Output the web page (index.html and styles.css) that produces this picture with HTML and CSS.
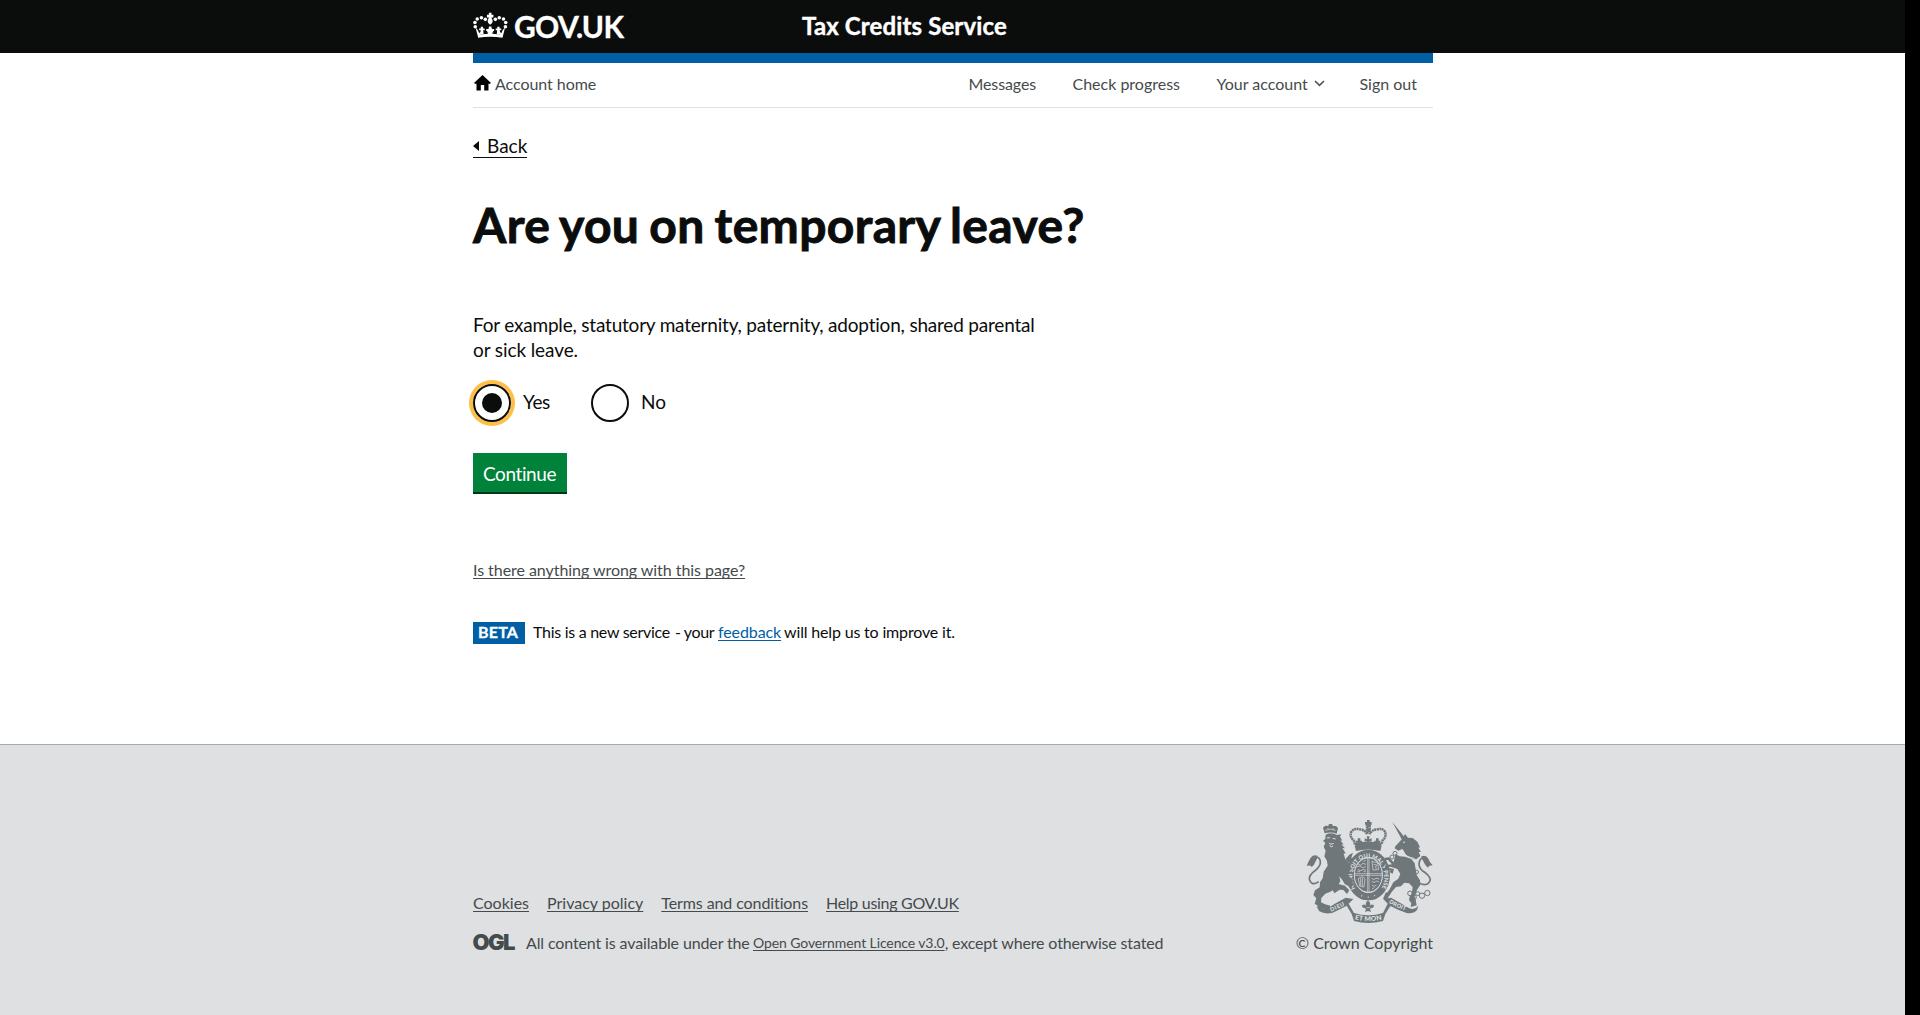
FILE: index.html
```html
<!DOCTYPE html>
<html lang="en">
<head>
<meta charset="utf-8">
<title>Are you on temporary leave?</title>
<link rel="stylesheet" href="styles.css">
</head>
<body>
<div class="page">
  <header class="header">
    <div class="container header-inner">
      <a class="logo">
        <svg class="crown" viewBox="9 22 108 80" fill="#fff">
          <path d="M17 68 L25 100 Q62 93 100 100 L108 68 Q98 76 97 85 Q90 83 88 71 Q82 74 84 85 Q75 88 70 82 L74 76 L65 78 L67 69 H57 L59 78 L50 76 L54 82 Q49 88 40 85 Q42 74 36 71 Q35 83 28 85 Q26 76 17 68Z"/>
          <path d="M32 86 Q62 80 93 86 L92 90 Q62 85 33 90Z" fill="#0b0c0c"/>
          <path d="M58 23h8v6h6v8h-6l4 11q0 7-8 12q-8-5-8-12l4-11h-6v-8h6zM33 66h7v5h5v6h-5l2 13h-11l2-13h-5v-6h5zM84 66h7v5h5v6h-5l2 13h-11l2-13h-5v-6h5zM58 65h8v8h8v6h-7l3 10h-16l3-10h-7v-6h8z"/>
          <circle cx="16" cy="66" r="5.5"/><circle cx="15" cy="53" r="5.5"/><circle cx="22" cy="42" r="5.5"/><circle cx="35" cy="38" r="5.5"/><circle cx="47" cy="43" r="5.5"/>
          <circle cx="109" cy="66" r="5.5"/><circle cx="110" cy="53" r="5.5"/><circle cx="103" cy="42" r="5.5"/><circle cx="90" cy="38" r="5.5"/><circle cx="78" cy="43" r="5.5"/>
        </svg>
        <span class="logo-text">GOV.UK</span>
      </a>
      <span class="service">Tax Credits Service</span>
    </div>
  </header>

  <div class="container">
    <nav class="account-nav">
      <a class="home">
        <svg class="home-icon" viewBox="0 0 17 16"><path d="M8.5 0 L17 8 L15.5 9 L14.5 8.6 V15.5 H10.2 V10 H6.8 V15.5 H2.5 V8.6 L1.5 9 L0 8 Z"/></svg>
        <span class="home-text">Account home</span>
      </a>
      <div class="links">
        <a class="l-messages">Messages</a>
        <a class="l-progress">Check progress</a>
        <a class="l-account">Your account<svg class="chevron" viewBox="0 0 11 7"><path d="M1 1 L5.5 5.3 L10 1" fill="none" stroke="#505558" stroke-width="1.7"/></svg></a>
        <a class="l-signout">Sign out</a>
      </div>
    </nav>

    <main class="content">
      <a class="back"><svg class="back-icon" viewBox="0 0 6 10"><path d="M6 0v10L0 5z" fill="#0b0c0c"/></svg><span>Back</span></a>
      <h1 class="title">Are you on temporary leave?</h1>
      <p class="hint">For example, statutory maternity, paternity, adoption, shared parental<br><span class="hint-end">or sick leave.</span></p>
      <div class="radios">
        <label class="radio radio-yes"><span class="ring ring-focus"><span class="dot"></span></span><span class="yes">Yes</span></label>
        <label class="radio"><span class="ring"></span><span>No</span></label>
      </div>
      <button class="button">Continue</button>
      <a class="report">Is there anything wrong with this page?</a>
      <div class="phase">
        <strong class="tag">BETA</strong>
        <span class="p-one">This is a new service</span>
        <span class="p-two">- your</span>
        <a class="p-link">feedback</a>
        <span class="p-three">will help us to improve it.</span>
      </div>
    </main>
  </div>

  <footer class="footer">
    <div class="container footer-inner">
      <div class="meta">
        <div class="footer-links">
          <a class="f-cookies">Cookies</a>
          <a class="f-privacy">Privacy policy</a>
          <a class="f-terms">Terms and conditions</a>
          <a class="f-help">Help using GOV.UK</a>
        </div>
        <div class="licence">
          <svg class="ogl" viewBox="0 0 42 20"><text x="-0.6" y="16.5" textLength="43" lengthAdjust="spacing">OGL</text></svg>
          <span class="c-one">All content is available under the</span>
          <a class="c-link">Open Government Licence v3.0</a><span class="c-two">, except where otherwise stated</span>
        </div>
      </div>
      <div class="copyright">
        <svg class="crest" viewBox="9 12 381 312" fill="#6f777b">
          <!-- crown -->
          <g>
            <path d="M155 92 Q195 82 236 92 L232 108 Q195 99 159 108Z"/>
            <path d="M156 88 L152 76 Q140 66 144 52 Q152 38 170 43 Q186 45 192 57 V32 H200 V57 Q206 45 222 43 Q240 38 247 52 Q250 66 239 76 L235 88" fill="none" stroke="#6f777b" stroke-width="7.5" stroke-dasharray="6 1.5"/>
            <path d="M192 15h8v6h6v8h-6v8h-8v-8h-6v-8h6zM191 64h9l-2 9 8-3v10l-7-2 4 9h-15l4-9-7 2v-10l8 3zM164 70h8v7h5v6h-5l2 7-11 1 1-8h-6v-6h6zM219 70h8v7h5v6h-5l2 8-12-1 2-7h-5v-6h5z"/>
            <path d="M156 84 Q196 76 235 84 V92 H156Z"/>
            <circle cx="196" cy="45" r="6"/>
          </g>
          <!-- garter and shield -->
          <ellipse cx="196" cy="180" rx="54" ry="65" fill="none" stroke="#6f777b" stroke-width="22"/>
          <ellipse cx="196" cy="180" rx="42" ry="52"/>
          <ellipse cx="196" cy="180" rx="42" ry="52" fill="none" stroke="#dee0e2" stroke-width="2.5"/>
          <path d="M194 129v104M198 129v104M155 176h82M155 181h82" stroke="#dee0e2" stroke-width="1.8"/>
          <path d="M164 146l9 5 6-6 10 3M161 155l10-2 8 5 9-3M164 164l10 3 6-4 9 3M163 170h8M182 170h6M181 139l7-3M207 139l3 26 17-1-3-20zM212 148l9 2-4 8 5 3M166 190l14-5 6 7-3 24-13-3zM173 190v22M178 189v25M206 190l8 4 5-5 10 3M206 200l9 2 6-4 7 3M207 211l7 3 6-4M207 222l7-4" fill="none" stroke="#dee0e2" stroke-width="2"/>
          <path id="garter" d="M157 221 A48 59 0 1 1 235 221" fill="none"/>
          <text class="motto"><textPath href="#garter" textLength="238">HONI SOIT QUI MAL Y PENSE</textPath></text>
          <path d="M175 239l4 3-3 4zM195 243l3 4-4 2zM214 239l3 4-5 1z" fill="#dee0e2"/>
          <!-- lion -->
          <path d="M65 55 L60 38 L66 32 L76 33 L78 27 L87 27 L90 33 L99 33 L105 39 L101 56 Q83 49 65 55Z"/>
          <path d="M67 46q15-7 31 0M74 39l2 4M90 39l1 4" fill="none" stroke="#dee0e2" stroke-width="2"/>
          <path d="M68 59 Q84 50 102 60 L115 58 L111 65 L118 77 L112 76 L122 89 L115 88 L126 100 L118 99 L128 115 L122 116 L127 133 L140 145 L143 165 L134 172 L138 184 L148 195 L150 210 L143 222 L136 213 L125 207 L118 195 L109 184 L112 199 L101 218 L82 230 L67 236 L55 249 L54 262 L66 268 L82 272 L78 285 L62 281 L48 284 L42 270 L35 267 L40 250 L31 240 L36 226 L50 217 L51 202 L59 190 L62 170 L74 152 L72 138 L64 124 L68 108 L62 95 L67 84 L60 77 L67 72Z"/>
          <path d="M72 69l9-1M89 70l9 2M78 84l6 4 8-3M80 91q4 9 10 2" fill="none" stroke="#dee0e2" stroke-width="3"/>
          <path d="M127 133 L139 119 L150 113 L145 128 L151 136 L138 143Z"/>
          <path d="M47 200 Q26 215 19 193 Q18 180 35 168 Q54 153 52 139 Q50 126 38 126" fill="none" stroke="#6f777b" stroke-width="5"/>
          <path d="M43 122 Q31 118 23 128 Q16 139 11 153 Q22 149 26 156 Q34 151 38 139 Q43 133 43 122Z"/>
          <path d="M86 219 L107 207 L126 212 L139 226 L132 237 L121 225 L110 224 L94 235Z"/>
          <!-- unicorn -->
          <path d="M268 21 L306 68 L296 73Z"/>
          <path d="M306 57 L315 68 L329 69 L343 80 L351 97 L346 98 L354 111 L347 111 L352 123 L338 134 L324 129 L309 121 L303 109 L298 102 L286 107 L275 100 L277 94 L291 79 L300 68Z"/>
          <circle cx="303" cy="82" r="2.5" fill="#dee0e2"/>
          <path d="M278 117 L290 124 L306 125 L325 132 L335 145 L338 162 L341 180 L351 196 L352 209 L342 225 L336 241 L329 252 L321 249 L327 231 L329 216 L318 205 L304 203 L294 214 L279 216 L266 231 L258 244 L249 238 L260 223 L271 202 L286 191 L292 177 L283 162 L263 155 L250 158 L249 150 L267 148 L255 135 L246 136 L245 128 L258 127 L272 142 L274 132Z"/>
          <path d="M284 119l14-8 17 14 17 5 9 6" fill="none" stroke="#dee0e2" stroke-width="3"/>
          <path d="M246 151l12 8 15 3-4 14-9-4 2-6-16-6zM321 240l15 5 5 26-18 5 2-11-7-10zM249 231l10 10-7 13-12-3z"/>
          <path d="M349 205 Q377 216 382 194 Q379 179 358 167 Q345 155 349 140 Q352 128 365 127" fill="none" stroke="#6f777b" stroke-width="5"/>
          <path d="M355 124 Q370 119 376 131 Q380 142 389 151 Q378 151 375 158 Q365 150 361 139 Q357 134 355 124Z"/>
          <g fill="none" stroke="#6f777b" stroke-width="3"><circle cx="267" cy="126" r="6"/><circle cx="276" cy="115" r="6"/><circle cx="341" cy="171" r="5.5"/><circle cx="321" cy="235" r="7"/><circle cx="333" cy="247" r="7"/><circle cx="344" cy="236" r="6"/><circle cx="357" cy="242" r="8"/><circle cx="373" cy="234" r="8"/></g>
          <!-- scroll -->
          <path d="M40 274 Q58 289 79 277 Q101 262 128 248 L151 252 L137 266 L153 294 Q196 308 240 294 L254 266 L241 252 L264 248 Q293 264 316 278 Q334 288 346 272 L342 285 Q331 297 311 294 Q287 286 262 273 L247 297 L240 318 Q196 330 153 318 L146 297 L131 272 Q107 285 87 294 Q64 298 49 289Z"/>
          <path d="M195 256q10 8 5 18 4-9 12-4 3 8-7 9l-4 3 3 9-9-3-9 3 3-9-4-3q-10-1-7-9 8-5 12 4-5-10 5-18z"/>
          <path d="M190 278h11" stroke="#dee0e2" stroke-width="2"/>
          <path id="dieu" d="M84 290 Q108 281 135 265" fill="none"/><path id="mon" d="M155 313 Q196 323 240 313" fill="none"/><path id="droit" d="M257 263 Q285 280 316 290" fill="none"/>
          <text class="scroll"><textPath href="#dieu" textLength="46">DIEU</textPath></text>
          <text class="scroll scroll-big"><textPath href="#mon" textLength="82">ET MON</textPath></text>
          <text class="scroll"><textPath href="#droit" textLength="55">DROIT</textPath></text>
        </svg>
        <a class="crown-text">© Crown Copyright</a>
      </div>
    </div>
  </footer>
</div>
</body>
</html>
```
FILE: styles.css
```css
* { box-sizing: border-box; }

html { background: #000; }

body {
  margin: 0;
  font-family: Lato, "Liberation Sans", sans-serif;
  font-size: 16px;
  line-height: 20px;
  color: #0b0c0c;
}

svg { display: block; flex: none; }

.page {
  width: 1905px;
  height: 1015px;
  display: flex;
  flex-direction: column;
  background: #fff;
  overflow: hidden;
  white-space: nowrap;
}

.container { width: 960px; margin: 0 0 0 473px; }

/* Header */
.header { height: 53px; background: #0b0c0c; color: #fff; flex: none; }
.header-inner { display: flex; align-items: flex-start; }
.logo { display: flex; width: 329px; }
.crown { width: 35px; height: 27px; margin: 12px 6px 0 0; }
.logo-text { margin-top: 11px; font-size: 30px; line-height: 30px; font-weight: 700; letter-spacing: -0.7px; -webkit-text-stroke: 0.3px #fff; }
.service { margin-top: 11px; font-size: 24px; line-height: 30px; font-weight: 700; letter-spacing: 0.13px; -webkit-text-stroke: 0.4px #fff; }

/* Account navigation */
.account-nav {
  height: 55px;
  border-top: 10px solid #005ea5;
  border-bottom: 1px solid #dee0e2;
  display: flex;
  justify-content: space-between;
  padding-top: 11px;
  color: #454a4c;
}
.home { display: flex; }
.home-icon { width: 17px; height: 16px; margin: 1px 4px 0 1px; }
.home-text { letter-spacing: -0.05px; }
.links { display: flex; padding-right: 16px; }
.l-messages { width: 104px; letter-spacing: -0.1px; }
.l-progress { width: 144px; }
.l-account { width: 143px; display: flex; }
.chevron { width: 11px; height: 7px; margin: 6px 0 0 6px; }

/* Question */
.content { display: flex; flex-direction: column; align-items: flex-start; font-size: 19px; line-height: 25px; }
.back { display: flex; margin-top: 25px; height: 25px; border-bottom: 1px solid #0b0c0c; }
.back-icon { width: 6px; height: 10px; margin: 8px 8px 0 0; }
.title { margin: 42px 0 0; font-size: 48px; line-height: 50px; font-weight: 700; letter-spacing: 0.35px; word-spacing: -2px; -webkit-text-stroke: 0.9px #0b0c0c; }
.hint { margin: 62px 0 0; letter-spacing: -0.2px; }
.hint-end { letter-spacing: -0.1px; }
.radios { display: flex; margin-top: 22px; }
.radio { display: flex; line-height: 36px; }
.radio-yes { width: 118px; }
.ring { width: 38px; height: 38px; border: 2px solid #0b0c0c; border-radius: 50%; margin-right: 12px; display: flex; align-items: center; justify-content: center; }
.ring-focus { box-shadow: 0 0 0 4px #ffbf47; }
.dot { width: 20px; height: 20px; border-radius: 50%; background: #0b0c0c; }
.yes { letter-spacing: -0.4px; }
.button {
  margin: 31px 0 0;
  width: 94px;
  height: 39px;
  padding: 8px 0 6px 10px;
  border: 0;
  background: #00823b;
  box-shadow: 0 2px 0 #003618;
  color: #fff;
  font: inherit;
  text-align: left;
  letter-spacing: -0.4px;
}
.report, .p-link, .footer-links a, .c-link {
  text-decoration: underline;
  text-decoration-thickness: 1px;
  text-underline-offset: 2px;
  text-decoration-skip-ink: none;
}
.report { margin-top: 68px; font-size: 16px; line-height: 20px; color: #454a4c; letter-spacing: -0.05px; }
.phase { display: flex; margin-top: 42px; font-size: 16px; line-height: 20px; }
.tag { width: 52px; height: 22px; padding-left: 5px; margin-right: 8px; background: #005ea5; color: #fff; letter-spacing: 0.2px; -webkit-text-stroke: 0.3px #fff; }
.p-one { width: 142px; letter-spacing: -0.28px; }
.p-two { width: 43px; letter-spacing: -0.4px; }
.p-link { margin-right: 3px; color: #005ea5; letter-spacing: -0.1px; }
.p-three { letter-spacing: -0.17px; }

/* Footer */
.footer { margin-top: auto; height: 271px; border-top: 1px solid #a1acb2; background: #dee0e2; color: #454a4c; }
.footer-inner { display: flex; justify-content: space-between; padding-top: 74px; }
.meta { padding-top: 74px; }
.footer-links { display: flex; gap: 18px; }
.f-terms { letter-spacing: -0.1px; }
.f-help { letter-spacing: -0.3px; }
.licence { display: flex; margin-top: 20px; }
.ogl { width: 42px; height: 20px; margin-right: 11px; overflow: visible; }
.ogl text { font-family: Inter, sans-serif; font-weight: 900; font-size: 22px; fill: #454a4c; }
.c-one { width: 227px; letter-spacing: -0.13px; }
.c-link { font-size: 14px; letter-spacing: -0.1px; }
.c-two { letter-spacing: -0.15px; }
.copyright { display: flex; flex-direction: column; align-items: flex-end; }
.crest { width: 127px; height: 104px; }
.crown-text { margin-top: 10px; }
.motto { font-size: 17px; font-weight: 900; fill: #dee0e2; }
.scroll { font-size: 17px; font-weight: 900; fill: #dee0e2; }
.scroll-big { font-size: 20px; }
```
